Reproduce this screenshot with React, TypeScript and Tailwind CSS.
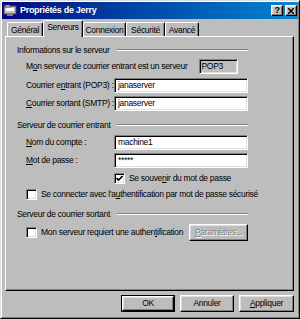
import React from "react";

const sunken =
  "border-t border-l border-t-[#808080] border-l-[#808080] border-b border-r border-b-white border-r-white shadow-[inset_1px_1px_0_#000,inset_-1px_-1px_0_#dfdfdf]";
const raised =
  "border-t border-l border-t-white border-l-white border-b border-r border-b-black border-r-black shadow-[inset_-1px_-1px_0_#808080,inset_1px_1px_0_#dfdfdf]";

function Header({ text }: { text: string }) {
  return (
    <div className="flex items-center h-[14px]">
      <span className="whitespace-nowrap">{text}</span>
      <div className="flex-1 ml-[7px] h-[2px] border-t border-t-[#808080] border-b border-b-white" />
    </div>
  );
}

function Field({ label, value }: { label: React.ReactNode; value: string }) {
  return (
    <div className="flex items-center h-[15px] pl-[9px]">
      <div className="w-[88px] whitespace-nowrap">{label}</div>
      <div className={`flex-1 h-[15px] bg-white flex items-center pl-[3px] ${sunken}`}>{value}</div>
    </div>
  );
}

function Check({ checked }: { checked?: boolean }) {
  return (
    <div className={`w-[11px] h-[11px] bg-white shrink-0 flex items-center justify-center ${sunken}`}>
      {checked && (
        <svg width="7" height="7" viewBox="0 0 7 7">
          <path d="M0.5 3 L2.5 5 L6.5 1" stroke="#000" strokeWidth="1.6" fill="none" />
        </svg>
      )}
    </div>
  );
}

function Tab({ label, w, selected }: { label: string; w: string; selected?: boolean }) {
  if (selected) {
    return (
      <div
        className={`${w} h-[17px] -mb-[1px] relative z-10 bg-[#bdbdbd] border-t border-l border-t-white border-l-white border-r border-r-black shadow-[inset_-1px_0_0_#808080] rounded-t-[2px] flex items-start justify-center pt-[2px]`}
      >
        {label}
      </div>
    );
  }
  return (
    <div
      className={`${w} h-[14px] border-t border-l border-t-white border-l-white border-r border-r-black shadow-[inset_-1px_0_0_#808080] rounded-t-[2px] flex items-center justify-center pt-[1px]`}
    >
      {label}
    </div>
  );
}

function Btn({ children, def, disabled, w }: { children: React.ReactNode; def?: boolean; disabled?: boolean; w: string }) {
  const inner = (
    <div
      className={`h-full w-full flex items-center justify-center ${raised} ${
        disabled ? "text-[#808080] [text-shadow:1px_1px_0_#fff]" : ""
      }`}
    >
      {children}
    </div>
  );
  if (def) {
    return <div className={`${w} h-[17px] border border-black`}>{inner}</div>;
  }
  return <div className={`${w} h-[17px]`}>{inner}</div>;
}

export default function App() {
  return (
    <div className="w-[300px] h-[319px] bg-[#bdbdbd] border border-t-[#dfdfdf] border-l-[#dfdfdf] border-r-black border-b-black font-['Liberation_Sans',Arial,sans-serif] text-[8.5px] tracking-[-0.3px] text-black leading-none">
      <div className="h-full border border-t-white border-l-white border-r-[#808080] border-b-[#808080] flex flex-col">
        {/* Title bar */}
        <div className="h-[17px] bg-linear-to-r from-[#000080] to-[#1084d0] flex items-center pl-[1px] pr-[1px]">
          <svg width="14" height="13" viewBox="0 0 14 13" className="shrink-0">
            <rect x="1" y="2" width="12" height="8" fill="#c0c0c0" stroke="#404040" strokeWidth="1" />
            <rect x="3" y="4" width="8" height="3" fill="#ffffff" />
            <rect x="2" y="1" width="5" height="2" fill="#e0e0e0" stroke="#404040" strokeWidth="0.8" />
            <rect x="4" y="10" width="6" height="2" fill="#808080" />
          </svg>
          <span className="ml-[3px] text-white font-bold text-[9px] tracking-[-0.3px]">Propriétés de Jerry</span>
          <div className="flex-1" />
          <div className={`w-[12px] h-[11px] bg-[#bdbdbd] flex items-center justify-center font-bold text-[9px] ${raised}`}>?</div>
          <div className={`ml-[2px] w-[12px] h-[11px] bg-[#bdbdbd] flex items-center justify-center ${raised}`}>
            <svg width="6" height="6" viewBox="0 0 6 6">
              <path d="M0 0 L6 6 M6 0 L0 6" stroke="#000" strokeWidth="1.5" />
            </svg>
          </div>
        </div>

        {/* Tabs */}
        <div className="mt-[1px] pl-[5px] flex items-end h-[16px]">
          <Tab label="Général" w="w-[36px]" />
          <Tab label="Serveurs" w="w-[40px]" selected />
          <Tab label="Connexion" w="w-[43px]" />
          <Tab label="Sécurité" w="w-[39px]" />
          <Tab label="Avancé" w="w-[34px]" />
        </div>

        {/* Panel */}
        <div className="ml-[3px] w-[289px] h-[255px] border-t border-l border-t-white border-l-white border-r border-b border-r-black border-b-black shadow-[inset_-1px_-1px_0_#808080]">
          <div className="ml-[11px] w-[231px] flex flex-col">
            <div className="mt-[6px]">
              <Header text="Informations sur le serveur" />
            </div>
            <div className="mt-[2px] flex items-center h-[15px] pl-[9px]">
              <span className="whitespace-nowrap">
                M<u>o</u>n serveur de courrier entrant est un serveur
              </span>
              <div className={`ml-[11px] w-[39px] h-[15px] flex items-center pl-[2px] ${sunken}`}>POP3</div>
            </div>
            <div className="mt-[4px]">
              <Field
                label={
                  <>
                    Courrier e<u>n</u>trant (POP3) :
                  </>
                }
                value="janaserver"
              />
            </div>
            <div className="mt-[3px]">
              <Field
                label={
                  <>
                    <u>C</u>ourrier sortant (SMTP) :
                  </>
                }
                value="janaserver"
              />
            </div>
            <div className="mt-[7px]">
              <Header text="Serveur de courrier entrant" />
            </div>
            <div className="mt-[3px]">
              <Field
                label={
                  <>
                    <u>N</u>om du compte :
                  </>
                }
                value="machine1"
              />
            </div>
            <div className="mt-[3px]">
              <Field
                label={
                  <>
                    <u>M</u>ot de passe :
                  </>
                }
                value="*****"
              />
            </div>
            <div className="mt-[5px] flex items-center h-[11px] pl-[97px]">
              <Check checked />
              <span className="ml-[4px] whitespace-nowrap">
                Se souve<u>n</u>ir du mot de passe
              </span>
            </div>
            <div className="mt-[5px] flex items-center h-[11px] pl-[9px]">
              <Check />
              <span className="ml-[4px] whitespace-nowrap">
                Se connecter avec l'a<u>u</u>thentification par mot de passe sécurisé
              </span>
            </div>
            <div className="mt-[7px]">
              <Header text="Serveur de courrier sortant" />
            </div>
            <div className="mt-[3px] flex items-center h-[17px] pl-[9px]">
              <Check />
              <span className="ml-[4px] whitespace-nowrap">
                Mon serveur requiert une authen<u>t</u>ification
              </span>
              <div className="flex-1" />
              <Btn w="w-[59px]" disabled>
                <span>
                  <u>P</u>aramètres...
                </span>
              </Btn>
            </div>
          </div>
        </div>

        {/* Bottom buttons */}
        <div className="mt-[4px] flex justify-end gap-[5px] pr-[4px]">
          <Btn w="w-[54px]" def>
            OK
          </Btn>
          <Btn w="w-[54px]">Annuler</Btn>
          <Btn w="w-[55px]">
            <span>
              <u>A</u>ppliquer
            </span>
          </Btn>
        </div>
      </div>
    </div>
  );
}
